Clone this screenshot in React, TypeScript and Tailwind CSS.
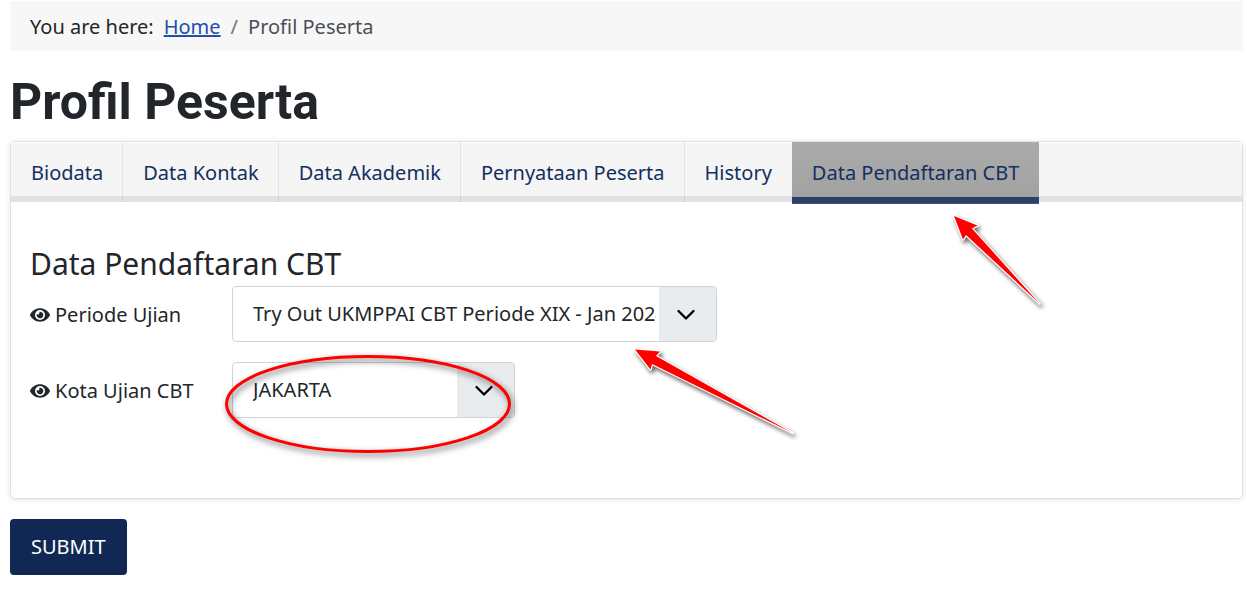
import type { ReactNode } from "react";
import { FaEye } from "react-icons/fa";
import { clsx } from "clsx";

const TABS = [
  "Biodata",
  "Data Kontak",
  "Data Akademik",
  "Pernyataan Peserta",
  "History",
  "Data Pendaftaran CBT",
];

const ACTIVE_TAB = "Data Pendaftaran CBT";

function Breadcrumb() {
  return (
    <nav aria-label="Breadcrumb" className="bg-[#f7f7f7] px-5 pt-[11px] pb-[9px]">
      <ol className="flex leading-[30px]">
        <li className="mr-2.5">You are here:</li>
        <li>
          <a href="#home" className="text-[#224faa] underline">Home</a>
        </li>
        <li aria-hidden="true" className="px-2.5 text-[#6d757e]">/</li>
        <li className="text-[#495057]">Profil Peserta</li>
      </ol>
    </nav>
  );
}

function TabArrow() {
  return (
    <svg
      className="pointer-events-none absolute top-[68px] right-[-10px] z-10 h-[104px] w-[100px] overflow-visible drop-shadow-[2px_3px_2px_rgba(0,0,0,0.6)]"
      viewBox="0 0 100 104"
      aria-hidden="true"
    >
      <path
        d="M5 6 L28.5 15.5 L23 18.5 L90.5 93.5 L17 25 L14 29.5 Z"
        fill="#ff0000"
        stroke="#ffffff"
        strokeWidth="2.5"
        strokeLinejoin="round"
        paintOrder="stroke"
      />
    </svg>
  );
}

function SelectArrow() {
  return (
    <svg
      className="pointer-events-none absolute top-[57px] right-[-84px] z-10 h-[100px] w-[172px] overflow-visible drop-shadow-[2px_3px_2px_rgba(0,0,0,0.6)]"
      viewBox="0 0 172 100"
      aria-hidden="true"
    >
      <path
        d="M6 6.5 L31 8.5 L27 13 L163.5 90 L23 21 L21.5 26.5 Z"
        fill="#ff0000"
        stroke="#ffffff"
        strokeWidth="2.5"
        strokeLinejoin="round"
        paintOrder="stroke"
      />
    </svg>
  );
}

function Highlight() {
  return (
    <svg
      className="pointer-events-none absolute top-[-8px] left-[-8px] z-10 h-[101px] w-[289px] overflow-visible drop-shadow-[2px_3px_3px_rgba(0,0,0,0.6)]"
      viewBox="0 0 289 101"
      aria-hidden="true"
    >
      <ellipse cx="144" cy="50" rx="141.5" ry="47.5" fill="none" stroke="#ff0000" strokeWidth="3" />
    </svg>
  );
}

interface SelectFieldProps {
  id: string;
  label: string;
  options: string[];
  widthClass: string;
  children?: ReactNode;
}

function SelectField({ id, label, options, widthClass, children }: SelectFieldProps) {
  return (
    <div className="flex">
      <label htmlFor={id} className="flex w-[202px] shrink-0 items-center gap-[5px] pt-0.5">
        <FaEye size={20} />
        <span>{label}</span>
      </label>
      <div className={clsx("relative", widthClass)}>
        <select
          id={id}
          className="h-14 w-full appearance-none rounded border border-[#ced4da] bg-white pr-[60px] pl-5"
        >
          {options.map((option) => (
            <option key={option}>{option}</option>
          ))}
        </select>
        <span className="pointer-events-none absolute inset-y-px right-px flex w-[57px] items-center rounded-r-[3px] bg-[#e9ecef] pl-[17px]">
          <svg className="h-5 w-5" viewBox="0 0 20 20" fill="none" aria-hidden="true">
            <path d="M2.5 7 L10 14.5 L17.5 7" stroke="#000000" strokeWidth="2.3" strokeLinecap="round" strokeLinejoin="round" />
          </svg>
        </span>
        {children}
      </div>
    </div>
  );
}

export default function App() {
  return (
    <div className="bg-white pt-px pr-1 pl-2.5 font-['Noto_Sans',sans-serif] text-[20px] leading-[30px] text-[#22262a]">
      <Breadcrumb />

      <h1 className="mt-[21px] mb-[9px] font-['Roboto',sans-serif] text-[50px] leading-[60px] font-bold">
        Profil Peserta
      </h1>

      <form onSubmit={(e) => e.preventDefault()}>
        <div className="rounded-[5px] border border-[#dfe0e5] shadow-[0_1px_6px_rgba(0,0,0,0.1)]">
          <div
            role="tablist"
            className="flex rounded-t bg-[#f5f5f5] shadow-[inset_0_-6px_0_#e2e2e2,inset_0_1px_0_#ffffff]"
          >
            {TABS.map((tab, i) => {
              const active = tab === ACTIVE_TAB;
              return (
                <div
                  key={tab}
                  className={clsx("relative", i < TABS.length - 2 && "shadow-[inset_-1px_0_0_rgba(0,0,0,0.07)]")}
                >
                  <button
                    type="button"
                    role="tab"
                    aria-selected={active}
                    className={clsx(
                      "block px-5 pt-4 pb-3.5 whitespace-nowrap text-[#132f5f]",
                      active && "bg-linear-to-b from-[#ababab] to-[#a1a1a1]"
                    )}
                  >
                    {tab}
                  </button>
                  {active && (
                    <>
                      <span className="absolute inset-x-0 bottom-[-2px] h-[7px] border-b border-[#43557c] bg-[#2c3f67]" />
                      <TabArrow />
                    </>
                  )}
                </div>
              );
            })}
          </div>

          <div role="tabpanel" className="px-[19px] pt-11 pb-20">
            <h2 className="mb-1 text-[30px] leading-9">Data Pendaftaran CBT</h2>
            <div className="flex flex-col gap-5">
              <SelectField
                id="periode"
                label="Periode Ujian"
                options={["Try Out UKMPPAI CBT Periode XIX - Jan 2024"]}
                widthClass="w-[485px]"
              >
                <SelectArrow />
              </SelectField>
              <SelectField
                id="kota"
                label="Kota Ujian CBT"
                options={["JAKARTA"]}
                widthClass="w-[283px]"
              >
                <Highlight />
              </SelectField>
            </div>
          </div>
        </div>

        <button type="submit" className="mt-5 rounded bg-[#112855] px-[21px] py-[13px] text-white">
          SUBMIT
        </button>
      </form>
    </div>
  );
}
